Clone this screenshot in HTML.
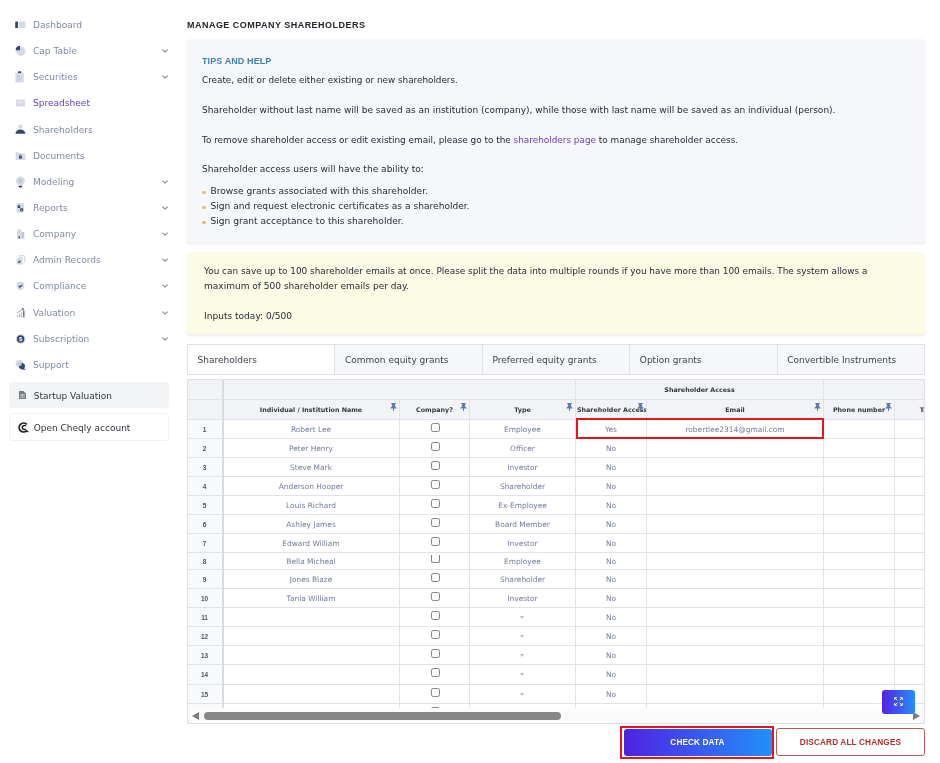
<!DOCTYPE html>
<html lang="en">
<head>
<meta charset="utf-8">
<title>Manage Company Shareholders</title>
<style>
*{box-sizing:border-box;margin:0;padding:0}
html,body{width:940px;height:763px;overflow:hidden;background:#fff}
#wrap{position:absolute;left:0;top:0;width:940px;height:763px;will-change:transform}
body{font-family:"DejaVu Sans","Liberation Sans",sans-serif;font-size:8.9px;color:#2f3440;position:relative}
.abs{position:absolute}
/* sidebar */
.nav{position:absolute;left:0;top:12px;width:180px}
.nav .it{position:relative;height:26.15px;line-height:26.15px;white-space:nowrap;color:#818aa4;font-size:9.05px}
.nav .it .ic{position:absolute;left:15px;top:7px;width:12px;height:12px}
.nav .it .tx{position:absolute;left:33px;top:0}
.nav .it .ch{position:absolute;left:161px;top:10px;width:8px;height:6px}
.nav .it.act{color:#6b3fc4}
.sbox{position:absolute;left:8.5px;width:160.5px;border-radius:3px;white-space:nowrap;font-size:9px}
.sbox .tx{position:absolute;left:25.2px;top:0}
/* main */
h1{position:absolute;left:187px;top:19px;font-family:"Liberation Sans",sans-serif;font-size:9px;font-weight:bold;color:#22252c;letter-spacing:.47px;line-height:13px;white-space:nowrap}
.tips{position:absolute;left:187px;top:39px;width:738px;height:203px;background:#f6f7fb;border-radius:3px;box-shadow:0 2px 3px rgba(50,60,90,.10)}
.tips h2{position:absolute;left:15px;top:16px;font-family:"Liberation Sans",sans-serif;font-size:9px;font-weight:bold;color:#3f82ad;letter-spacing:.1px;line-height:12px}
.tips p{position:absolute;left:15px;white-space:nowrap;line-height:13px;color:#272b35}
.tips a{color:#6b3fc4;text-decoration:none}
.tips li{list-style:none;position:absolute;left:23.5px;white-space:nowrap;line-height:13px;color:#272b35;font-size:9.1px}
.tips li:before{content:"";position:absolute;left:-8.5px;top:5.6px;width:3.8px;height:3.8px;border-radius:50%;background:#ebb875}
.warn{position:absolute;left:187px;top:252px;width:738px;height:82px;background:#fbfbe6;border-radius:3px;box-shadow:0 2px 3px rgba(50,60,90,.10)}
.warn p{position:absolute;left:17px;white-space:nowrap;line-height:13px;color:#272b35}

/* tabs */
.tabs{position:absolute;left:187px;top:344px;width:738px;height:31px;border:1px solid #e0e1e7;background:#f6f7fb;display:flex}
.tabs div{flex:1;border-right:1px solid #e0e1e7;line-height:31.5px;padding-left:9.6px;font-size:9px;color:#3a3f4a;white-space:nowrap}
.tabs div:first-child{background:#fff}
.tabs div:last-child{border-right:0}
/* grid */
.grid{position:absolute;left:187px;top:379px;width:738px;height:344.5px;border:1px solid #dfe0e5;overflow:hidden;background:#fff}
.grid>div{position:absolute}
.hbg{background:#f2f3f6}
.hbg.r{background:#f8f9fb}
.hl{height:1px;background:#e2e3e9}
.vl{width:1px;background:#e2e3e9}
.vl.th{width:2px;background:#d9dbe2}
.hd{font-size:6.35px;font-weight:bold;color:#33363d;text-align:center;line-height:19px;white-space:nowrap}
.hd.h4{text-align:left;padding-left:1px;overflow:hidden}
.pin{position:absolute;right:2.5px;top:2.6px;width:7px;height:8.4px}
.rn{left:0;width:33px;text-align:center;font-family:"Liberation Sans",sans-serif;font-size:6.5px;font-weight:bold;color:#50535b;letter-spacing:-.2px}
.c{text-align:center;font-size:7.45px;color:#737c9b;white-space:nowrap}
.cb{width:9.4px;height:9.2px;border:1px solid #858585;border-radius:2.3px;background:#fff}
.cb.cut{height:7.7px;border-top:0;border-radius:0 0 2.3px 2.3px}
.cb.cutb{height:5px;border-bottom:0;border-radius:2.3px 2.3px 0 0}
.dd{width:0;height:0;border-left:2.6px solid transparent;border-right:2.6px solid transparent;border-top:3.2px solid #b9bbc3}
.red{border:2px solid #e8141c}
.sbar{left:0;width:736px;height:15px;background:#fbfbfc}
.sbar div{position:absolute}
.sbar .al{left:3.5px;top:3.5px;width:0;height:0;border-top:4.5px solid transparent;border-bottom:4.5px solid transparent;border-right:7px solid #7c7c7c}
.sbar .ar{left:725px;top:3.5px;width:0;height:0;border-top:4.5px solid transparent;border-bottom:4.5px solid transparent;border-left:7px solid #7c7c7c}
.sbar .thumb{left:15.7px;top:4px;width:357.5px;height:8px;border-radius:4px;background:#878787}
.fs{width:32.5px;height:23.5px;border-radius:3px;background:linear-gradient(90deg,#5322e6,#2490fa);display:flex;align-items:center;justify-content:center}
/* buttons */
.redo{position:absolute;left:620px;top:725.5px;width:154px;height:33px;border:2px solid #e8141c}
.btn1{position:absolute;left:623.5px;top:728.5px;width:148px;height:27.5px;border-radius:3px;background:linear-gradient(90deg,#4f22e4,#2190fa);color:#fff;font-weight:bold;font-family:"Liberation Sans",sans-serif;font-size:8.25px;text-align:center;line-height:28px;letter-spacing:.1px}
.btn2{position:absolute;left:776px;top:728px;width:149px;height:28px;border-radius:3px;border:1px solid #b95c5a;background:#fff;color:#a8322f;font-weight:bold;font-family:"Liberation Sans",sans-serif;font-size:8.25px;text-align:center;line-height:27px;letter-spacing:.12px}
</style>
</head>
<body>
<div id="wrap">
<div class="nav" id="nav">
<div class="it"><svg class="ic" viewBox="0 0 12 12"><rect x="0.2" y="2.4" width="2.8" height="6.6" rx=".6" fill="#33466e"/><rect x="4" y="2.4" width="6.4" height="6.6" rx=".6" fill="#d5d9e6"/></svg><span class="tx">Dashboard</span></div>
<div class="it"><svg class="ic" viewBox="0 0 12 12"><circle cx="5.8" cy="6.2" r="4.6" fill="#d5d9e6"/><path d="M5 0.8 A4.6 4.6 0 0 0 0.6 5.2 L5 5.2 Z" fill="#33466e"/></svg><span class="tx">Cap Table</span><svg class="ch" viewBox="0 0 8 6"><path d="M1.5 1.6L4.1 4.1L6.7 1.6" stroke="#7c859f" stroke-width="1.1" fill="none"/></svg></div>
<div class="it"><svg class="ic" viewBox="0 0 12 12"><rect x="0.4" y="1.4" width="8.4" height="10.2" rx="1" fill="#d5d9e6"/><rect x="3" y="0.3" width="3.2" height="1.8" rx=".6" fill="#33466e"/><rect x="2" y="5" width="3" height=".8" fill="#b9c0d4"/><rect x="2" y="7.6" width="5" height=".8" fill="#b9c0d4"/></svg><span class="tx">Securities</span><svg class="ch" viewBox="0 0 8 6"><path d="M1.5 1.6L4.1 4.1L6.7 1.6" stroke="#7c859f" stroke-width="1.1" fill="none"/></svg></div>
<div class="it act"><svg class="ic" viewBox="0 0 12 12"><rect x="1" y="2.4" width="9" height="7.2" rx=".8" fill="#d5d9e6"/><path d="M5.5 2.4V9.6M1 5.2H10" stroke="#eceef5" stroke-width=".7"/></svg><span class="tx">Spreadsheet</span></div>
<div class="it"><svg class="ic" viewBox="0 0 12 12"><circle cx="5.4" cy="2.6" r="2.2" fill="#d5d9e6"/><path d="M0.4 9.8 A5 4.4 0 0 1 10.4 9.8 Z" fill="#33466e"/></svg><span class="tx">Shareholders</span></div>
<div class="it"><svg class="ic" viewBox="0 0 12 12"><path d="M0.6 2.2H4L5 3.4H10.2V10H0.6Z" fill="#d5d9e6"/><rect x="4" y="6.2" width="3" height="2.4" rx=".4" fill="#33466e"/><path d="M4.6 6.2V5.6A.9 .9 0 0 1 6.4 5.6V6.2" stroke="#33466e" stroke-width=".7" fill="none"/></svg><span class="tx">Documents</span></div>
<div class="it"><svg class="ic" viewBox="0 0 12 12"><path d="M5.4 0.4A4.4 4.4 0 0 0 2.6 8.2L3.2 9.4H7.6L8.2 8.2A4.4 4.4 0 0 0 5.4 0.4Z" fill="#d5d9e6"/><rect x="3.6" y="9.8" width="3.6" height="1.6" rx=".7" fill="#33466e"/><text x="5.4" y="7" font-size="6" font-family="Liberation Sans,sans-serif" text-anchor="middle" fill="#aab1c8">$</text></svg><span class="tx">Modeling</span><svg class="ch" viewBox="0 0 8 6"><path d="M1.5 1.6L4.1 4.1L6.7 1.6" stroke="#7c859f" stroke-width="1.1" fill="none"/></svg></div>
<div class="it"><svg class="ic" viewBox="0 0 12 12"><rect x="1.6" y="1" width="7.4" height="9.8" rx=".8" fill="#d5d9e6"/><rect x="2.6" y="3.4" width="2.6" height="2.6" fill="#33466e"/><circle cx="6.6" cy="7.8" r="1.7" fill="#33466e"/><circle cx="6.6" cy="7.8" r=".6" fill="#d5d9e6"/></svg><span class="tx">Reports</span><svg class="ch" viewBox="0 0 8 6"><path d="M1.5 1.6L4.1 4.1L6.7 1.6" stroke="#7c859f" stroke-width="1.1" fill="none"/></svg></div>
<div class="it"><svg class="ic" viewBox="0 0 12 12"><rect x="2" y="1.4" width="4.6" height="8.6" fill="#d5d9e6"/><rect x="6.6" y="4" width="2.6" height="6" fill="#bfc5d8"/><rect x="3.6" y="8.4" width="1.4" height="1.8" fill="#33466e"/><rect x="1.4" y="10" width="8.4" height=".6" fill="#bfc5d8"/></svg><span class="tx">Company</span><svg class="ch" viewBox="0 0 8 6"><path d="M1.5 1.6L4.1 4.1L6.7 1.6" stroke="#7c859f" stroke-width="1.1" fill="none"/></svg></div>
<div class="it"><svg class="ic" viewBox="0 0 12 12"><path d="M4 1.6H8.6A1 1 0 0 1 9.6 2.6V8.4" stroke="#d5d9e6" stroke-width="1.2" fill="none"/><path d="M1.6 5L3.8 2.8H7.6V10.4H1.6Z" fill="#d5d9e6"/><path d="M2.4 8.8L5.4 6L5.4 8.8Z" fill="#33466e"/></svg><span class="tx">Admin Records</span><svg class="ch" viewBox="0 0 8 6"><path d="M1.5 1.6L4.1 4.1L6.7 1.6" stroke="#7c859f" stroke-width="1.1" fill="none"/></svg></div>
<div class="it"><svg class="ic" viewBox="0 0 12 12"><path d="M5.4 1.4L9.2 2.8V6C9.2 8.2 7.5 9.8 5.4 10.6C3.3 9.8 1.6 8.2 1.6 6V2.8Z" fill="#d5d9e6"/><path d="M3.7 6L4.9 7.2L7.3 4.8" stroke="#33466e" stroke-width="1.1" fill="none"/></svg><span class="tx">Compliance</span><svg class="ch" viewBox="0 0 8 6"><path d="M1.5 1.6L4.1 4.1L6.7 1.6" stroke="#7c859f" stroke-width="1.1" fill="none"/></svg></div>
<div class="it"><svg class="ic" viewBox="0 0 12 12"><rect x="1.8" y="8" width="1.3" height="2.4" fill="#bfc5d8"/><rect x="3.9" y="6.6" width="1.3" height="3.8" fill="#aab1c8"/><rect x="6" y="5.2" width="1.3" height="5.2" fill="#bfc5d8"/><rect x="8.1" y="3.4" width="1.4" height="7" fill="#5f6c8e"/><path d="M1.8 6.2L7.6 2.2" stroke="#7582a3" stroke-width=".7" fill="none"/><path d="M6.4 1.4L8.8 1.3L8.3 3.4Z" fill="#33466e"/></svg><span class="tx">Valuation</span><svg class="ch" viewBox="0 0 8 6"><path d="M1.5 1.6L4.1 4.1L6.7 1.6" stroke="#7c859f" stroke-width="1.1" fill="none"/></svg></div>
<div class="it"><svg class="ic" viewBox="0 0 12 12"><circle cx="5.6" cy="6" r="4.8" fill="#d5d9e6"/><circle cx="5.6" cy="6" r="3.7" fill="#33466e"/><text x="5.6" y="8.2" font-size="6" font-weight="bold" font-family="Liberation Sans,sans-serif" text-anchor="middle" fill="#fff">$</text></svg><span class="tx">Subscription</span><svg class="ch" viewBox="0 0 8 6"><path d="M1.5 1.6L4.1 4.1L6.7 1.6" stroke="#7c859f" stroke-width="1.1" fill="none"/></svg></div>
<div class="it"><svg class="ic" viewBox="0 0 12 12"><circle cx="4.4" cy="4.6" r="3.8" fill="#d5d9e6"/><path d="M4.2 6.2A3 3 0 1 1 9.2 9.2L10.6 11L7.6 10.4A3 3 0 0 1 4.2 6.2Z" fill="#33466e"/><circle cx="5" cy="5.2" r="1.8" fill="#bfc5d8"/></svg><span class="tx">Support</span></div>
</div><!--navend-->
<h1>MANAGE COMPANY SHAREHOLDERS</h1>
<div class="tips">
<h2>TIPS AND HELP</h2>
<p style="top:35px;font-size:8.82px">Create, edit or delete either existing or new shareholders.</p>
<p style="top:64.5px;font-size:9.02px">Shareholder without last name will be saved as an institution (company), while those with last name will be saved as an individual (person).</p>
<p style="top:94.5px">To remove shareholder access or edit existing email, please go to the <a>shareholders page</a> to manage shareholder access.</p>
<p style="top:124px;font-size:9.05px">Shareholder access users will have the ability to:</p>
<ul>
<li style="top:146px">Browse grants associated with this shareholder.</li>
<li style="top:161px">Sign and request electronic certificates as a shareholder.</li>
<li style="top:176px">Sign grant acceptance to this shareholder.</li>
</ul>
</div>
<div class="warn">
<p style="top:13px">You can save up to 100 shareholder emails at once. Please split the data into multiple rounds if you have more than 100 emails. The system allows a</p>
<p style="top:28px;font-size:9.02px">maximum of 500 shareholder emails per day.</p>
<p style="top:58px;font-size:9.05px">Inputs today: 0/500</p>
</div>
<div class="sbox" style="top:382px;height:26px;line-height:28px;background:#f3f4f6;color:#33363d"><svg class="abs" style="left:10px;top:9px" width="7" height="8" viewBox="0 0 7 8"><path d="M0 0H4.4L7 2.6V8H0Z" fill="#757982"/><path d="M1 3.3H6M1 4.8H6M1 6.3H6M3 3.3V6.3" stroke="#e3e4e8" stroke-width=".6"/></svg><span class="tx">Startup Valuation</span></div>
<div class="sbox" style="top:413px;height:28px;line-height:28px;background:#fff;border:1px solid #f0f0f2;color:#33363d"><svg class="abs" style="left:8.6px;top:7.6px" width="11" height="11" viewBox="0 0 11 11"><path d="M8.8 2.3A4.5 4.5 0 1 0 8.8 8.7" stroke="#1c1c1c" stroke-width="1.7" fill="none"/><path d="M7.9 4.1A2.1 2.1 0 1 0 7.9 6.9" stroke="#1c1c1c" stroke-width="1.5" fill="none"/><path d="M8.4 8.5L10.3 10.1" stroke="#1c1c1c" stroke-width="1.3"/></svg><span class="tx" style="left:24.2px">Open Cheqly account</span></div>
<div class="tabs"><div>Shareholders</div><div>Common equity grants</div><div>Preferred equity grants</div><div>Option grants</div><div>Convertible Instruments</div></div>
<div class="redo"></div>
<div class="btn1">CHECK DATA</div>
<div class="btn2">DISCARD ALL CHANGES</div>
<div class="grid">
<div class="hbg" style="left:0;top:0;width:736px;height:40px"></div>
<div class="hbg r" style="left:0;top:40px;width:34px;height:288px"></div>
<div class="hl" style="top:19px;left:0;width:736px"></div>
<div class="hl" style="top:39px;left:0;width:736px"></div>
<div class="hl" style="top:58px;left:0;width:736px"></div>
<div class="hl" style="top:77px;left:0;width:736px"></div>
<div class="hl" style="top:96px;left:0;width:736px"></div>
<div class="hl" style="top:115px;left:0;width:736px"></div>
<div class="hl" style="top:134px;left:0;width:736px"></div>
<div class="hl" style="top:153px;left:0;width:736px"></div>
<div class="hl" style="top:172px;left:0;width:736px"></div>
<div class="hl" style="top:189px;left:0;width:736px"></div>
<div class="hl" style="top:208px;left:0;width:736px"></div>
<div class="hl" style="top:227px;left:0;width:736px"></div>
<div class="hl" style="top:246px;left:0;width:736px"></div>
<div class="hl" style="top:265px;left:0;width:736px"></div>
<div class="hl" style="top:284px;left:0;width:736px"></div>
<div class="hl" style="top:304px;left:0;width:736px"></div>
<div class="hl" style="top:323px;left:0;width:736px"></div>
<div class="vl th" style="left:33.5px;top:0;height:328px"></div>
<div class="vl" style="left:211px;top:20px;height:308px"></div>
<div class="vl" style="left:281px;top:20px;height:308px"></div>
<div class="vl" style="left:387px;top:0px;height:328px"></div>
<div class="vl" style="left:458px;top:20px;height:308px"></div>
<div class="vl" style="left:635px;top:0px;height:328px"></div>
<div class="vl" style="left:706px;top:20px;height:308px"></div>
<div class="hd" style="left:388px;top:0;width:247px;height:19px">Shareholder Access</div>
<div class="hd h1" style="left:35px;top:20px;width:176px;height:19px"><span>Individual / Institution Name</span><svg class="pin" viewBox="0 0 8 10"><path d="M1.3 0H6.7V1.3H5.9V4.2L7.5 5.6V6.5H4.6V9.2L4 10L3.4 9.2V6.5H0.5V5.6L2.1 4.2V1.3H1.3Z" fill="#5f7bb0"/></svg></div>
<div class="hd h2" style="left:212px;top:20px;width:69px;height:19px"><span>Company?</span><svg class="pin" viewBox="0 0 8 10"><path d="M1.3 0H6.7V1.3H5.9V4.2L7.5 5.6V6.5H4.6V9.2L4 10L3.4 9.2V6.5H0.5V5.6L2.1 4.2V1.3H1.3Z" fill="#5f7bb0"/></svg></div>
<div class="hd h3" style="left:282px;top:20px;width:105px;height:19px"><span>Type</span><svg class="pin" viewBox="0 0 8 10"><path d="M1.3 0H6.7V1.3H5.9V4.2L7.5 5.6V6.5H4.6V9.2L4 10L3.4 9.2V6.5H0.5V5.6L2.1 4.2V1.3H1.3Z" fill="#5f7bb0"/></svg></div>
<div class="hd h4" style="left:388px;top:20px;width:70px;height:19px"><span>Shareholder Access</span><svg class="pin" viewBox="0 0 8 10"><path d="M1.3 0H6.7V1.3H5.9V4.2L7.5 5.6V6.5H4.6V9.2L4 10L3.4 9.2V6.5H0.5V5.6L2.1 4.2V1.3H1.3Z" fill="#5f7bb0"/></svg></div>
<div class="hd h5" style="left:459px;top:20px;width:176px;height:19px"><span>Email</span><svg class="pin" viewBox="0 0 8 10"><path d="M1.3 0H6.7V1.3H5.9V4.2L7.5 5.6V6.5H4.6V9.2L4 10L3.4 9.2V6.5H0.5V5.6L2.1 4.2V1.3H1.3Z" fill="#5f7bb0"/></svg></div>
<div class="hd h6" style="left:636px;top:20px;width:70px;height:19px"><span>Phone number</span><svg class="pin" viewBox="0 0 8 10"><path d="M1.3 0H6.7V1.3H5.9V4.2L7.5 5.6V6.5H4.6V9.2L4 10L3.4 9.2V6.5H0.5V5.6L2.1 4.2V1.3H1.3Z" fill="#5f7bb0"/></svg></div>
<div class="hd" style="left:707px;top:20px;width:31px;height:19px;overflow:hidden;text-align:left;padding-left:24.7px">Ta</div>
<div class="rn" style="top:40px;height:18px;line-height:19.6px">1</div>
<div class="c" style="left:35px;width:176px;top:40px;height:18px;line-height:19.6px">Robert Lee</div>
<div class="c" style="left:282px;width:105px;top:40px;height:18px;line-height:19.6px">Employee</div>
<div class="cb" style="left:242.7px;top:43px"></div>
<div class="c" style="left:388px;width:70px;top:40px;height:18px;line-height:19.6px">Yes</div>
<div class="c" style="left:459px;width:176px;top:40px;height:18px;line-height:19.6px">robertlee2314@gmail.com</div>
<div class="rn" style="top:59px;height:18px;line-height:19.6px">2</div>
<div class="c" style="left:35px;width:176px;top:59px;height:18px;line-height:19.6px">Peter Henry</div>
<div class="c" style="left:282px;width:105px;top:59px;height:18px;line-height:19.6px">Officer</div>
<div class="cb" style="left:242.7px;top:62px"></div>
<div class="c" style="left:388px;width:70px;top:59px;height:18px;line-height:19.6px">No</div>
<div class="rn" style="top:78px;height:18px;line-height:19.6px">3</div>
<div class="c" style="left:35px;width:176px;top:78px;height:18px;line-height:19.6px">Steve Mark</div>
<div class="c" style="left:282px;width:105px;top:78px;height:18px;line-height:19.6px">Investor</div>
<div class="cb" style="left:242.7px;top:81px"></div>
<div class="c" style="left:388px;width:70px;top:78px;height:18px;line-height:19.6px">No</div>
<div class="rn" style="top:97px;height:18px;line-height:19.6px">4</div>
<div class="c" style="left:35px;width:176px;top:97px;height:18px;line-height:19.6px">Anderson Hooper</div>
<div class="c" style="left:282px;width:105px;top:97px;height:18px;line-height:19.6px">Shareholder</div>
<div class="cb" style="left:242.7px;top:100px"></div>
<div class="c" style="left:388px;width:70px;top:97px;height:18px;line-height:19.6px">No</div>
<div class="rn" style="top:116px;height:18px;line-height:19.6px">5</div>
<div class="c" style="left:35px;width:176px;top:116px;height:18px;line-height:19.6px">Louis Richard</div>
<div class="c" style="left:282px;width:105px;top:116px;height:18px;line-height:19.6px">Ex-Employee</div>
<div class="cb" style="left:242.7px;top:119px"></div>
<div class="c" style="left:388px;width:70px;top:116px;height:18px;line-height:19.6px">No</div>
<div class="rn" style="top:135px;height:18px;line-height:19.6px">6</div>
<div class="c" style="left:35px;width:176px;top:135px;height:18px;line-height:19.6px">Ashley James</div>
<div class="c" style="left:282px;width:105px;top:135px;height:18px;line-height:19.6px">Board Member</div>
<div class="cb" style="left:242.7px;top:138px"></div>
<div class="c" style="left:388px;width:70px;top:135px;height:18px;line-height:19.6px">No</div>
<div class="rn" style="top:154px;height:18px;line-height:19.6px">7</div>
<div class="c" style="left:35px;width:176px;top:154px;height:18px;line-height:19.6px">Edward William</div>
<div class="c" style="left:282px;width:105px;top:154px;height:18px;line-height:19.6px">Investor</div>
<div class="cb" style="left:242.7px;top:157px"></div>
<div class="c" style="left:388px;width:70px;top:154px;height:18px;line-height:19.6px">No</div>
<div class="rn" style="top:173px;height:16px;line-height:17.6px">8</div>
<div class="c" style="left:35px;width:176px;top:173px;height:16px;line-height:17.6px">Bella Micheal</div>
<div class="c" style="left:282px;width:105px;top:173px;height:16px;line-height:17.6px">Employee</div>
<div class="cb cut" style="left:242.7px;top:175px"></div>
<div class="c" style="left:388px;width:70px;top:173px;height:16px;line-height:17.6px">No</div>
<div class="rn" style="top:190px;height:18px;line-height:19.6px">9</div>
<div class="c" style="left:35px;width:176px;top:190px;height:18px;line-height:19.6px">Jones Blaze</div>
<div class="c" style="left:282px;width:105px;top:190px;height:18px;line-height:19.6px">Shareholder</div>
<div class="cb" style="left:242.7px;top:193px"></div>
<div class="c" style="left:388px;width:70px;top:190px;height:18px;line-height:19.6px">No</div>
<div class="rn" style="top:209px;height:18px;line-height:19.6px">10</div>
<div class="c" style="left:35px;width:176px;top:209px;height:18px;line-height:19.6px">Tania William</div>
<div class="c" style="left:282px;width:105px;top:209px;height:18px;line-height:19.6px">Investor</div>
<div class="cb" style="left:242.7px;top:212px"></div>
<div class="c" style="left:388px;width:70px;top:209px;height:18px;line-height:19.6px">No</div>
<div class="rn" style="top:228px;height:18px;line-height:19.6px">11</div>
<div class="dd" style="left:332.4px;top:236.2px"></div>
<div class="cb" style="left:242.7px;top:231px"></div>
<div class="c" style="left:388px;width:70px;top:228px;height:18px;line-height:19.6px">No</div>
<div class="rn" style="top:247px;height:18px;line-height:19.6px">12</div>
<div class="dd" style="left:332.4px;top:255.2px"></div>
<div class="cb" style="left:242.7px;top:250px"></div>
<div class="c" style="left:388px;width:70px;top:247px;height:18px;line-height:19.6px">No</div>
<div class="rn" style="top:266px;height:18px;line-height:19.6px">13</div>
<div class="dd" style="left:332.4px;top:274.2px"></div>
<div class="cb" style="left:242.7px;top:269px"></div>
<div class="c" style="left:388px;width:70px;top:266px;height:18px;line-height:19.6px">No</div>
<div class="rn" style="top:285px;height:19px;line-height:20.6px">14</div>
<div class="dd" style="left:332.4px;top:293.2px"></div>
<div class="cb" style="left:242.7px;top:288px"></div>
<div class="c" style="left:388px;width:70px;top:285px;height:19px;line-height:20.6px">No</div>
<div class="rn" style="top:305px;height:18px;line-height:19.6px">15</div>
<div class="dd" style="left:332.4px;top:313.2px"></div>
<div class="cb" style="left:242.7px;top:308px"></div>
<div class="c" style="left:388px;width:70px;top:305px;height:18px;line-height:19.6px">No</div>
<div class="cb cutb" style="left:242.7px;top:326.5px"></div>
<div class="red" style="left:387.5px;top:38px;width:248.5px;height:21px"></div>
<div class="sbar" style="top:328px"><div class="al"></div><div class="thumb"></div><div class="ar"></div></div>
<div class="fs" style="left:694px;top:310px"><svg viewBox="0 0 10 10" width="9" height="9"><path d="M0.8 3.4V0.8H3.4M6.6 0.8H9.2V3.4M9.2 6.6V9.2H6.6M3.4 9.2H0.8V6.6M0.8 0.8L3.6 3.6M9.2 0.8L6.4 3.6M9.2 9.2L6.4 6.4M0.8 9.2L3.6 6.4" stroke="#fff" stroke-width="1" fill="none"/></svg></div>
</div><!--gridend-->
</div>
</body>
</html>
